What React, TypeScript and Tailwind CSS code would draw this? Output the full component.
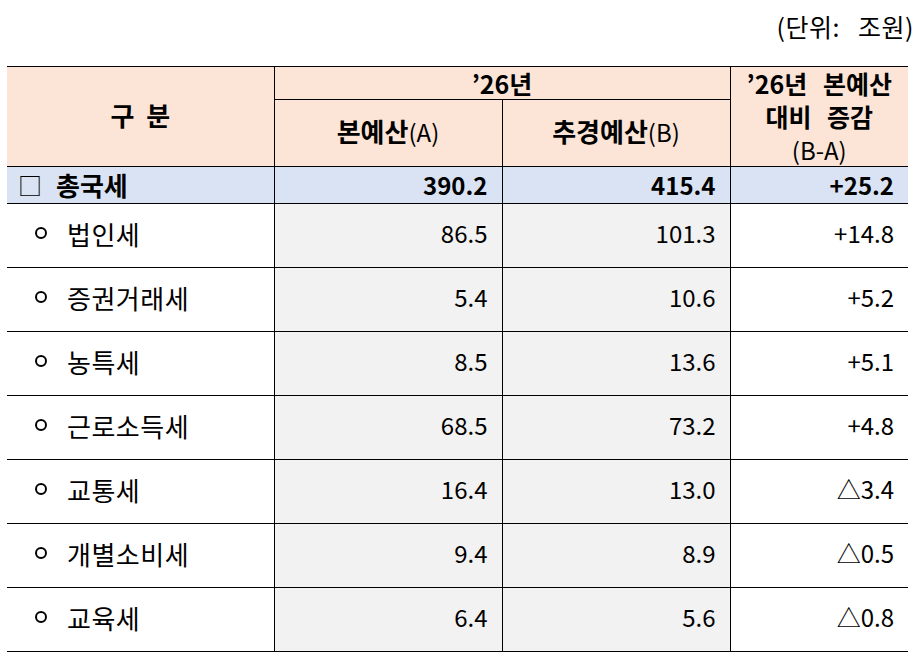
const rows = [
  { name: '법인세', a: '86.5', b: '101.3', diff: '+14.8' },
  { name: '증권거래세', a: '5.4', b: '10.6', diff: '+5.2' },
  { name: '농특세', a: '8.5', b: '13.6', diff: '+5.1' },
  { name: '근로소득세', a: '68.5', b: '73.2', diff: '+4.8' },
  { name: '교통세', a: '16.4', b: '13.0', diff: '△3.4' },
  { name: '개별소비세', a: '9.4', b: '8.9', diff: '△0.5' },
  { name: '교육세', a: '6.4', b: '5.6', diff: '△0.8' },
]

export default function App() {
  return (
    <div className="w-[920px] h-[658px] bg-white text-black font-['Noto_Sans_CJK_KR',sans-serif]">
      {/* unit */}
      <div className="flex justify-end pr-[6px] pt-[10px] h-[66px]">
        <span className="text-[25px] leading-[32px] tracking-[0.5px] [word-spacing:12px]">(단위: 조원)</span>
      </div>

      <table className="ml-[7px] w-[901px] table-fixed border-collapse text-[24px]">
        <colgroup>
          <col className="w-[267px]" />
          <col className="w-[228px]" />
          <col className="w-[228px]" />
          <col className="w-[178px]" />
        </colgroup>
        <thead>
          <tr className="h-[33px] bg-[#fce4d6]">
            <th rowSpan={2} className="border-t border-b border-r border-black font-bold text-center align-middle pb-[4px] text-[26px] [word-spacing:6px]">
              구 분
            </th>
            <th colSpan={2} className="border-t border-b border-r border-black font-bold text-center text-[25px] leading-[30px]">
              ’26년
            </th>
            <th rowSpan={2} className="border-t border-b border-black font-bold text-center text-[25px] leading-[33px] [word-spacing:10px]">
              <div>’26년 본예산</div>
              <div>대비 증감</div>
              <div className="font-normal text-[24px]">(B-A)</div>
            </th>
          </tr>
          <tr className="h-[67px] bg-[#fce4d6]">
            <th className="border-b border-r border-black text-center pb-[5px]">
              <span className="font-bold text-[26px]">본예산</span>
              <span className="font-normal">(A)</span>
            </th>
            <th className="border-b border-r border-black text-center pb-[5px]">
              <span className="font-bold text-[26px]">추경예산</span>
              <span className="font-normal">(B)</span>
            </th>
          </tr>
        </thead>
        <tbody>
          <tr className="h-[37px] bg-[#dae3f3] font-bold">
            <td className="border-b border-r border-black pl-[11px]">
              <div className="flex items-center gap-[14px]">
                <span className="font-normal">□</span>
                <span className="text-[26px] leading-[32px]">총국세</span>
              </div>
            </td>
            <td className="border-b border-r border-black text-right pr-[14px]">390.2</td>
            <td className="border-b border-r border-black text-right pr-[14px]">415.4</td>
            <td className="border-b border-black text-right pr-[14px]">+25.2</td>
          </tr>
          {rows.map((r) => (
            <tr key={r.name} className="h-[64px]">
              <td className="border-b border-r border-black pl-[28px] pb-[5px]">
                <div className="flex items-center gap-[20px]">
                  <span className="w-[12px] h-[12px] rounded-full border-2 border-black" />
                  <span className="text-[26px] tracking-[0.5px]">{r.name}</span>
                </div>
              </td>
              <td className="border-b border-r border-black bg-[#f2f2f2] text-right pr-[14px] pb-[5px]">{r.a}</td>
              <td className="border-b border-r border-black bg-[#f2f2f2] text-right pr-[14px] pb-[5px]">{r.b}</td>
              <td className="border-b border-black text-right pr-[14px] pb-[5px]">{r.diff}</td>
            </tr>
          ))}
        </tbody>
      </table>
    </div>
  )
}
